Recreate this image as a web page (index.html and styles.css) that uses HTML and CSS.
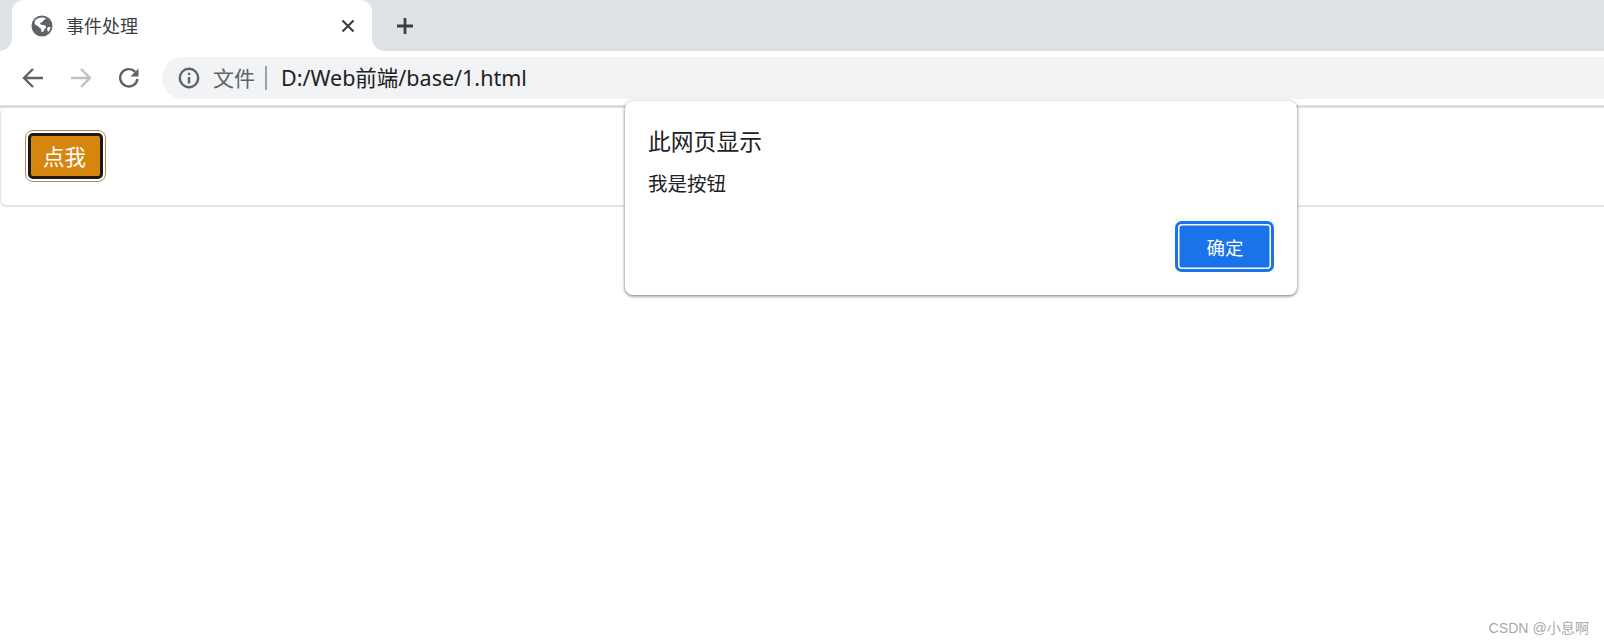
FILE: index.html
```html
<!DOCTYPE html>
<html lang="zh-CN">
<head>
<meta charset="utf-8">
<title>事件处理</title>
<link rel="stylesheet" href="styles.css">
</head>
<body>
<header class="browser">
  <div class="tabstrip">
    <div class="tab">
      <svg class="favicon" viewBox="0 0 22 22" aria-hidden="true"><circle cx="11" cy="11" r="10.5" fill="#5f6368"/><path d="M4 5.500c2-2.200 4.600-3 7.500-3 1.200 0 2.400.2 3.500.7-.6 1.300-1.600 1.500-2.500 2-.8.500-.5 1.600-1.500 2-1 .3-1.900.3-1.900 1.400 0 1 1.200 1 2.200 1.500 1.400 0 3.200.2 3.700 1.500.4 1.100-.6 1.800-1.400 2.600-.6.700-.5 1.700-1.300 2.400-.6.500-1.300.6-1.700.3-.5-1.100-.1-2.300-.7-3.200-.6-.8-1.800-.9-2.100-2L4.100 9.500C3.500 8 3.500 6.800 4 5.500z" fill="#fff"/><path d="M16.800 12.500c.5-.3 1.800-.5 2.700-.3-.2 1.800-1.100 3.400-2.300 4.600-.7-.6-.8-1.600-1-2.400-.1-.8 0-1.500.6-1.900z" fill="#fff"/></svg>
      <span class="tab-title">事件处理</span>
      <svg class="tab-close" viewBox="0 0 14 14" aria-hidden="true"><path d="M1.500 1.500l11 11M12.500 1.500l-11 11"/></svg>
    </div>
    <svg class="new-tab" viewBox="0 0 18 18" aria-hidden="true"><path d="M9 1v16M1 9h16"/></svg>
  </div>
  <div class="toolbar">
    <svg class="nav" viewBox="0 0 24 24" aria-hidden="true"><path d="M22 12H3.500M12 3l-9 9 9 9"/></svg>
    <svg class="nav nav-off" viewBox="0 0 24 24" aria-hidden="true"><path d="M2 12h18.500M12 3l9 9-9 9"/></svg>
    <svg class="nav" viewBox="0 0 24 24" aria-hidden="true"><path d="M20.500 13a8.700 8.700 0 1 1-2.300-7.200"/><path class="solid" d="M21.500 2.500v8h-8z"/></svg>
    <div class="omnibox">
      <svg class="info" viewBox="0 0 22 22" aria-hidden="true"><circle cx="11" cy="11" r="9.200"/><path d="M11 10v6.500M11 5.800v2.200"/></svg>
      <span class="scheme">文件</span>
      <span class="divider"></span>
      <span class="url">D:/Web前端/base/1.html</span>
    </div>
  </div>
</header>
<main class="page">
  <section class="card">
    <button class="action" type="button">点我</button>
  </section>
</main>
<div class="dialog" role="alertdialog">
  <h1 class="dialog-title">此网页显示</h1>
  <p class="dialog-text">我是按钮</p>
  <div class="dialog-actions"><button class="confirm" type="button">确定</button></div>
</div>
<div class="watermark">CSDN @小息啊</div>
</body>
</html>
```
FILE: styles.css
```css
* { box-sizing: border-box; }
html, body { margin: 0; height: 100%; }
body {
  position: relative;
  overflow: hidden;
  background: #fff;
  font-family: "Noto Sans", "Noto Sans CJK SC", sans-serif;
  color: #202124;
}
.browser { display: flex; flex-direction: column; }
.tabstrip {
  height: 51px;
  background: #dee1e6;
  display: flex;
  align-items: flex-start;
  padding-left: 12px;
}
.tab {
  position: relative;
  width: 360px;
  height: 51px;
  background: #fff;
  border-radius: 12px 12px 0 0;
  display: flex;
  align-items: center;
  padding: 0 17px 0 19px;
}
.tab::before,
.tab::after {
  content: "";
  position: absolute;
  bottom: 0;
  width: 12px;
  height: 12px;
}
.tab::before { left: -12px; background: radial-gradient(circle at 0 0, #dee1e6 11.500px, #fff 12px); }
.tab::after { right: -12px; background: radial-gradient(circle at 100% 0, #dee1e6 11.500px, #fff 12px); }
.favicon { width: 22px; height: 22px; flex: none; }
.tab-title {
  margin-left: 13px;
  font-size: 18px;
  color: #3c4043;
  flex: 1;
  line-height: 1;
}
.tab-close { width: 14px; height: 14px; fill: none; stroke: #3c4043; stroke-width: 2.200; }
.new-tab { width: 18px; height: 18px; margin: 17px 0 0 24px; fill: none; stroke: #3c4043; stroke-width: 2.800; }
.toolbar {
  height: 54px;
  background: #fff;
  display: flex;
  align-items: center;
  padding-left: 21px;
  gap: 24px;
}
.nav { width: 24px; height: 24px; flex: none; fill: none; stroke: #5f6368; stroke-width: 2.400; }
.nav-off { stroke: #bdc1c6; }
.nav .solid { fill: #5f6368; stroke: none; }
.omnibox {
  flex: 1;
  height: 42px;
  margin-left: -3px;
  background: #f1f3f4;
  border-radius: 21px 0 0 21px;
  display: flex;
  align-items: center;
  padding-left: 16px;
}
.info { width: 22px; height: 22px; flex: none; fill: none; stroke: #5f6368; stroke-width: 2.400; }
.scheme { margin-left: 13px; font-size: 21px; color: #5f6368; line-height: 1; }
.divider { width: 2px; height: 24px; background: #9aa0a6; margin: 0 14px 0 10px; }
.url { font-size: 21.500px; color: #202124; line-height: 1; }
.page { border-top: 3px solid #dadce0; }
.card {
  height: 99px;
  border: 1px solid #e2e4e7;
  border-width: 0 0 2px 1px;
  border-radius: 6px 0 0 6px;
  padding: 25px 0 0 27px;
}
.action {
  display: block;
  width: 75px;
  height: 46px;
  padding: 0 2px 0 0;
  background: #d6860f;
  color: #fff;
  font: 21.500px/1 "Noto Sans CJK SC", sans-serif;
  border: 3px solid #1a1a1a;
  border-radius: 5px;
  outline: 1px solid #b98b52;
  outline-offset: 2px;
}
.dialog {
  position: absolute;
  left: 625px;
  top: 101px;
  width: 672px;
  height: 194px;
  background: #fff;
  border-radius: 8px;
  box-shadow: 0 1px 3px 1px rgba(60,64,67,.35), 0 1px 2px rgba(60,64,67,.3);
  padding: 27px 23px 23px 23px;
  display: flex;
  flex-direction: column;
}
.dialog-title { margin: 0; font-size: 22.800px; font-weight: 400; line-height: 28px; color: #202124; }
.dialog-text { margin: 15px 0 0; font-size: 19.500px; line-height: 26px; color: #202124; }
.dialog-actions { margin-top: auto; display: flex; justify-content: flex-end; }
.confirm {
  width: 99px;
  height: 51px;
  padding: 1px 0 0 1px;
  background: #1a73e8;
  color: #fff;
  font: 18.500px/1 "Noto Sans CJK SC", sans-serif;
  border: 0;
  border-radius: 7px;
  box-shadow: inset 0 0 0 3px #1a73e8, inset 0 0 0 4.500px #fff;
}
.watermark {
  position: absolute;
  right: 15px;
  bottom: 7px;
  font-family: "Liberation Sans", "Noto Sans CJK SC", sans-serif;
  font-size: 14.100px;
  line-height: 18px;
  color: #a8a8a8;
}
```
